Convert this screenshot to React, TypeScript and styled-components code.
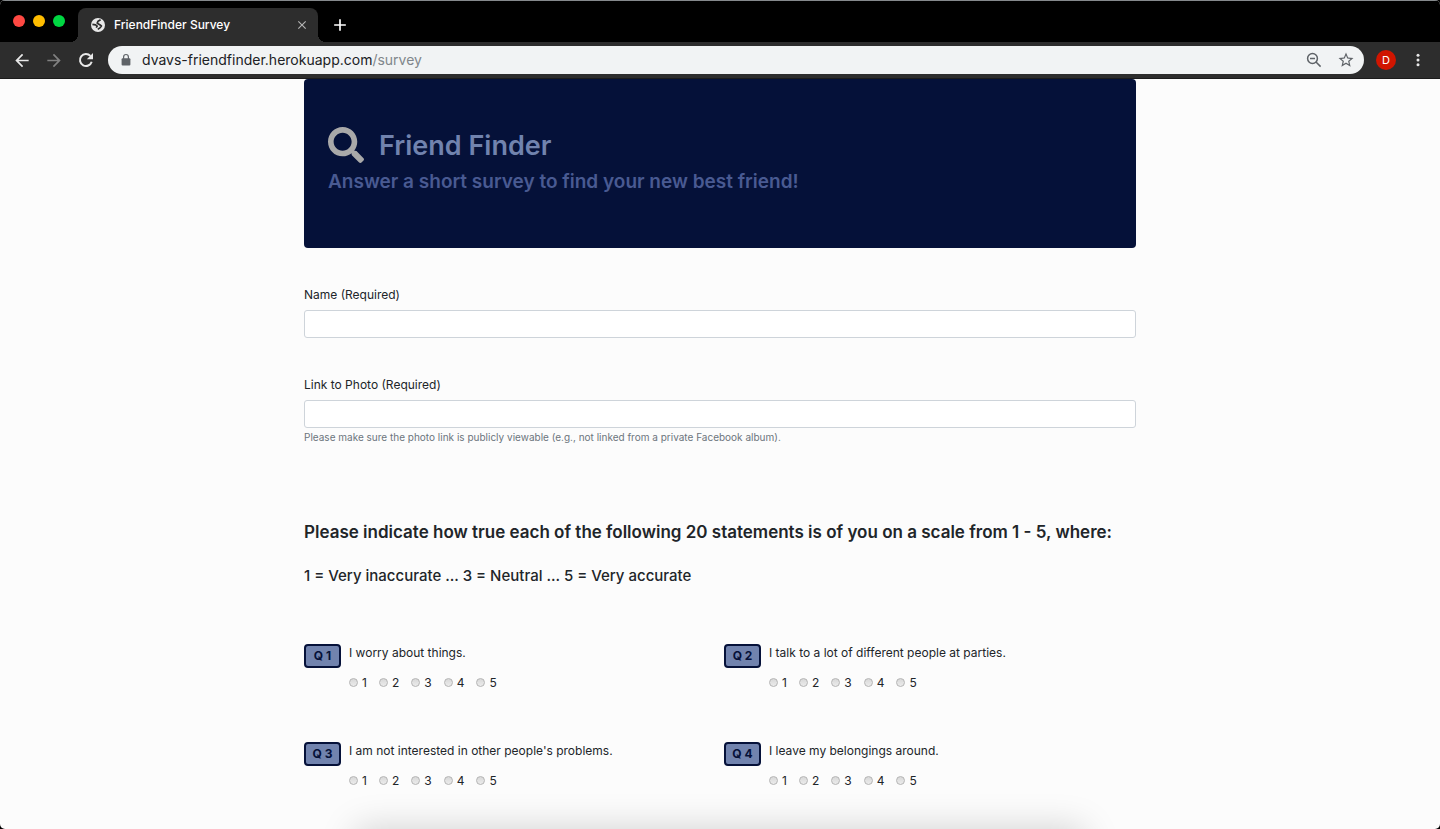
import React from "react";
import styled, { createGlobalStyle } from "styled-components";
import { FaSearch } from "react-icons/fa";
import {
  MdArrowBack,
  MdArrowForward,
  MdClose,
  MdAdd,
  MdStarBorder,
} from "react-icons/md";

const GlobalStyle = createGlobalStyle`
  * { box-sizing: border-box; }
  html { background: #000; }
  body {
    margin: 0;
    font-family: Inter, "Liberation Sans", sans-serif;
    font-size: 12px;
    line-height: 18px;
    color: #212529;
  }
  button { font: inherit; border: 0; padding: 0; background: none; color: inherit; }
`;

const Window = styled.div`
  position: relative;
  display: flex;
  flex-direction: column;
  height: 100vh;
  overflow: hidden;
  background: #fcfcfc;
  border-radius: 5px;
`;

const TabStrip = styled.header`
  display: flex;
  align-items: flex-end;
  flex: none;
  height: 42px;
  background: #000;
  border-top: 1px solid #85898c;
`;

const Lights = styled.div`
  display: flex;
  align-self: flex-start;
  gap: 8px;
  width: 78px;
  padding: 14px 0 0 13px;
`;

const Light = styled.button<{ $color: string }>`
  width: 12px;
  height: 12px;
  border-radius: 50%;
  background: ${(p) => p.$color};
`;

const Tab = styled.div`
  position: relative;
  display: flex;
  align-items: center;
  width: 240px;
  height: 34px;
  padding: 0 8px 0 12px;
  border-radius: 8px 8px 0 0;
  background: #2d2d2d;
  color: #fff;

  &::before,
  &::after {
    content: "";
    position: absolute;
    bottom: 0;
    width: 8px;
    height: 8px;
  }
  &::before {
    right: 100%;
    background: radial-gradient(circle at 0 0, #000 8px, #2d2d2d 8px);
  }
  &::after {
    left: 100%;
    background: radial-gradient(circle at 100% 0, #000 8px, #2d2d2d 8px);
  }
`;

const TabTitle = styled.span`
  flex: 1;
  margin-left: 8px;
  font-weight: 500;
`;

const IconButton = styled.button<{ $size?: number; $color?: string }>`
  display: flex;
  align-items: center;
  justify-content: center;
  flex: none;
  width: ${(p) => p.$size || 20}px;
  height: ${(p) => p.$size || 20}px;
  color: ${(p) => p.$color || "#e8e8e8"};
`;

const NewTab = styled(IconButton)`
  align-self: center;
  margin: 6px 0 0 12px;
`;

const Toolbar = styled.nav`
  display: flex;
  align-items: center;
  flex: none;
  height: 37px;
  padding: 0 12px;
  gap: 12px;
  background: #2d2d2d;
  border-bottom: 1px solid #1c1c1c;
`;

const Address = styled.div`
  display: flex;
  align-items: center;
  flex: 1;
  height: 28px;
  padding: 0 8px 0 11px;
  gap: 12px;
  border-radius: 14px;
  background: #f1f3f4;
  color: #5f6368;
`;

const Url = styled.a`
  flex: 1;
  margin-left: -3px;
  font-size: 14px;
  color: #80868b;
  text-decoration: none;
`;

const Host = styled.span`
  color: #202124;
`;

const Avatar = styled(IconButton)`
  border-radius: 50%;
  background: #d01500;
  color: #fff;
  font-size: 11px;
`;

const Viewport = styled.main`
  flex: 1;
  min-height: 0;
  overflow: hidden;
`;

const Container = styled.div`
  max-width: 832px;
  margin: 0 auto;
`;

const Banner = styled.section`
  padding: 46px 24px 51px;
  border-radius: 4px;
  background: #051139;
`;

const BannerTitle = styled.h1`
  display: flex;
  align-items: center;
  gap: 15px;
  margin: 0;
  font-size: 27px;
  font-weight: 600;
  line-height: 42px;
  color: #7183ae;

  svg {
    margin-bottom: 3px;
    color: #a9a9a9;
  }
`;

const BannerSubtitle = styled.h2`
  margin: 0;
  font-size: 19px;
  font-weight: 600;
  line-height: 30px;
  color: #495a92;
`;

const Field = styled.div`
  display: flex;
  flex-direction: column;
  margin-top: 38px;
`;

const Label = styled.label`
  margin-bottom: 6px;
`;

const TextInput = styled.input`
  height: 28px;
  padding: 4px 9px;
  border: 1px solid #ced4da;
  border-radius: 3px;
  background: #fff;
  font: inherit;
`;

const Help = styled.small`
  margin-top: 2px;
  font-size: 10px;
  line-height: 14px;
  color: #6c757d;
`;

const Lead = styled.h3`
  margin: 77px 0 0;
  font-size: 17px;
  font-weight: 600;
  line-height: 22px;
`;

const Scale = styled.h4`
  margin: 24px 0 0;
  font-size: 15px;
  font-weight: 500;
  line-height: 18px;
`;

const Questions = styled.div`
  display: grid;
  grid-template-columns: 1fr 1fr;
  gap: 50px 8px;
  margin-top: 59px;
`;

const Question = styled.fieldset`
  display: flex;
  align-items: flex-start;
  gap: 8px;
  min-width: 0;
  height: 48px;
  margin: 0;
  padding: 0;
  border: 0;
`;

const Badge = styled.span`
  width: 37px;
  height: 24px;
  border: 2px solid #051139;
  border-radius: 4px;
  background: #7183ae;
  color: #051139;
  font-weight: 700;
  line-height: 20px;
  text-align: center;
`;

const Statement = styled.div`
  margin-bottom: 12px;
`;

const Options = styled.div`
  display: flex;
  gap: 12px;
`;

const Option = styled.label`
  display: flex;
  align-items: center;
  gap: 4px;
`;

const Radio = styled.input`
  appearance: none;
  width: 9px;
  height: 9px;
  margin: 0 0 1px;
  border: 1px solid #b4b4b4;
  border-radius: 50%;
  background: linear-gradient(#d8d8d8, #ececec);
`;

const BottomShade = styled.div`
  position: absolute;
  top: 100%;
  left: 25%;
  right: 25%;
  height: 40px;
  box-shadow: 0 4px 36px 4px rgba(0, 0, 0, 0.18);
`;

const Globe = () => (
  <svg width="16" height="16" viewBox="0 0 16 16" aria-hidden="true">
    <circle cx="8" cy="8" r="7" fill="#e8e8e8" />
    <path
      d="M10.6 2.8 8 4.3 7.2 6.2l2.6 1.5 1.6 1.2-1.2 1.7-2.4 1.8M2.4 7.4l3.2.5 1.6 1.2-1 1.5"
      fill="none"
      stroke="#2d2d2d"
      strokeWidth="1.7"
      strokeLinejoin="round"
    />
  </svg>
);

const Reload = () => (
  <svg width="20" height="20" viewBox="0 0 20 20" aria-hidden="true">
    <path d="M15.7 11.7A6 6 0 1 1 14.4 5.9" fill="none" stroke="#e8e8e8" strokeWidth="2" />
    <path d="M17 3v6.2h-6.2z" fill="#e8e8e8" />
  </svg>
);

const Lock = () => (
  <svg width="14" height="14" viewBox="0 0 14 14" aria-hidden="true">
    <path d="M4.6 6V3.9a2.4 2.4 0 0 1 4.8 0V6" fill="none" stroke="#5f6368" strokeWidth="1.2" />
    <rect x="2.6" y="5.2" width="8.8" height="7.4" rx="1" fill="#5f6368" />
  </svg>
);

const Magnifier = () => (
  <svg width="18" height="18" viewBox="0 0 18 18" fill="none" stroke="#5f6368" strokeWidth="1.5" aria-hidden="true">
    <circle cx="7.5" cy="7.5" r="4.9" />
    <path d="M5 7.5h5M11 11l4.6 4.6" />
  </svg>
);

const Dots = () => (
  <svg width="4" height="14" viewBox="0 0 4 14" fill="#e8e8e8" aria-hidden="true">
    <circle cx="2" cy="2.3" r="1.5" />
    <circle cx="2" cy="7" r="1.5" />
    <circle cx="2" cy="11.7" r="1.5" />
  </svg>
);

const statements = [
  "I worry about things.",
  "I talk to a lot of different people at parties.",
  "I am not interested in other people's problems.",
  "I leave my belongings around.",
];

export default function App() {
  return (
    <Window>
      <GlobalStyle />
      <TabStrip>
        <Lights>
          <Light $color="#ff4943" aria-label="Close window" />
          <Light $color="#ffbd00" aria-label="Minimize window" />
          <Light $color="#00d742" aria-label="Zoom window" />
        </Lights>
        <Tab>
          <Globe />
          <TabTitle>FriendFinder Survey</TabTitle>
          <IconButton $size={16} $color="#b4b4b4" aria-label="Close tab">
            <MdClose size={14} />
          </IconButton>
        </Tab>
        <NewTab $color="#fff" aria-label="New tab">
          <MdAdd size={20} />
        </NewTab>
      </TabStrip>
      <Toolbar>
        <IconButton aria-label="Back"><MdArrowBack size={21} /></IconButton>
        <IconButton $color="#818181" aria-label="Forward"><MdArrowForward size={21} /></IconButton>
        <IconButton aria-label="Reload"><Reload /></IconButton>
        <Address>
          <Lock />
          <Url href="#survey"><Host>dvavs-friendfinder.herokuapp.com</Host>/survey</Url>
          <IconButton aria-label="Zoom out"><Magnifier /></IconButton>
          <IconButton $color="#5f6368" aria-label="Bookmark"><MdStarBorder size={18} /></IconButton>
        </Address>
        <Avatar aria-label="Profile">D</Avatar>
        <IconButton aria-label="Menu"><Dots /></IconButton>
      </Toolbar>
      <Viewport>
        <Container>
          <Banner>
            <BannerTitle><FaSearch size={36} />Friend Finder</BannerTitle>
            <BannerSubtitle>Answer a short survey to find your new best friend!</BannerSubtitle>
          </Banner>
          <form>
            <Field>
              <Label htmlFor="name">Name (Required)</Label>
              <TextInput id="name" type="text" />
            </Field>
            <Field>
              <Label htmlFor="photo">Link to Photo (Required)</Label>
              <TextInput id="photo" type="text" />
              <Help>Please make sure the photo link is publicly viewable (e.g., not linked from a private Facebook album).</Help>
            </Field>
            <Lead>Please indicate how true each of the following 20 statements is of you on a scale from 1 - 5, where:</Lead>
            <Scale>1 = Very inaccurate ... 3 = Neutral ... 5 = Very accurate</Scale>
            <Questions>
              {statements.map((text, i) => (
                <Question key={text} aria-label={text}>
                  <Badge>Q {i + 1}</Badge>
                  <div>
                    <Statement>{text}</Statement>
                    <Options>
                      {[1, 2, 3, 4, 5].map((n) => (
                        <Option key={n}>
                          <Radio type="radio" name={`q${i + 1}`} value={n} />
                          {n}
                        </Option>
                      ))}
                    </Options>
                  </div>
                </Question>
              ))}
            </Questions>
          </form>
        </Container>
      </Viewport>
      <BottomShade />
    </Window>
  );
}
